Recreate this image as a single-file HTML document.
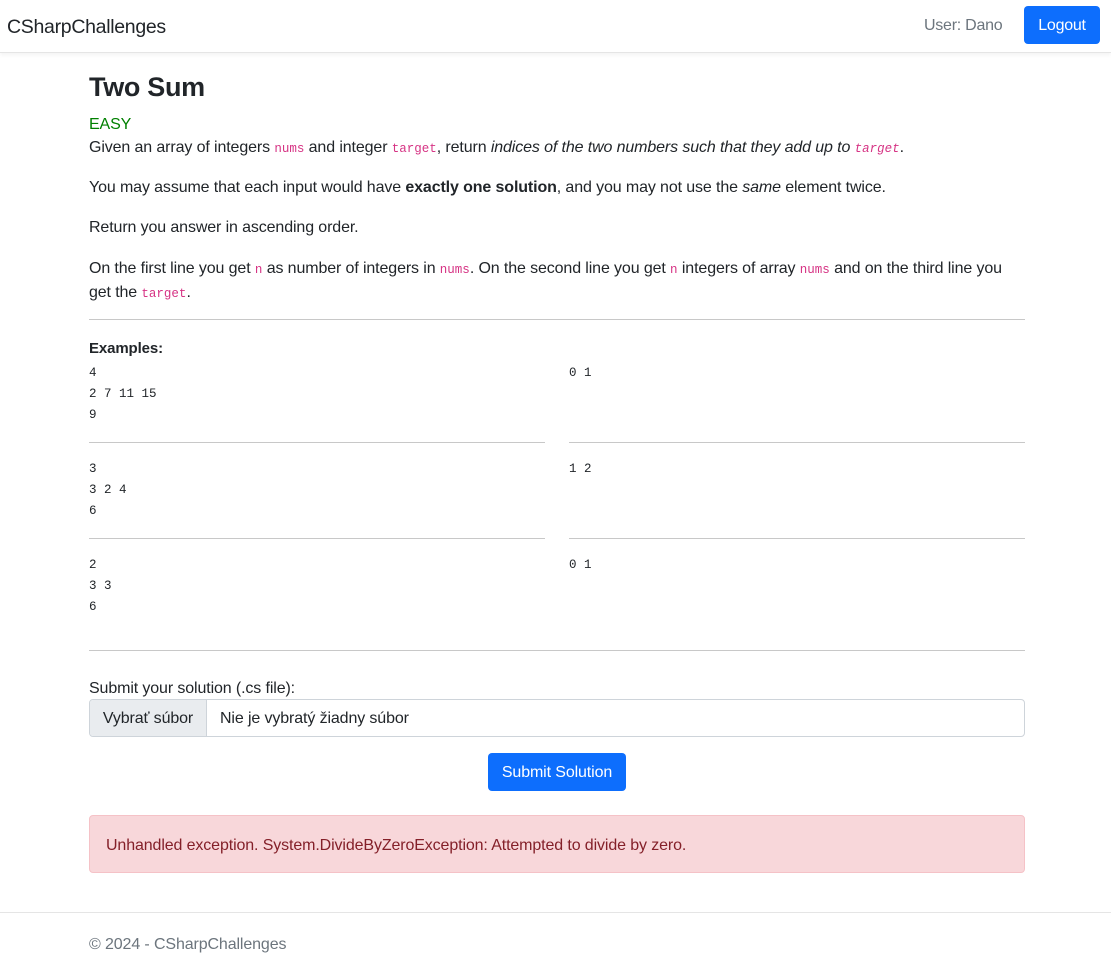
<!DOCTYPE html>
<html><head><meta charset="utf-8"><style>
body{margin:0;width:1111px;height:964px;font-family:"Liberation Sans",sans-serif;color:#212529;font-size:16px;position:relative;overflow:hidden;background:#fff}
.a{position:absolute;white-space:nowrap}
.t{letter-spacing:-0.12px}
code{font-family:"Liberation Mono",monospace;font-size:12.5px;color:#d63384;line-height:1;letter-spacing:0}
.m{font-family:"Liberation Mono",monospace;font-size:12.5px;line-height:21px;color:#212529}
.hr{position:absolute;height:1px;background:#c8c8c8}
</style></head><body>
<div class="a" style="left:0;top:0;width:1111px;height:52px;border-bottom:1px solid #e5e5e5;box-shadow:0 2px 4px rgba(0,0,0,.05)"></div>
<div class="a" style="left:7px;top:16px;font-size:19.5px;color:#212529;letter-spacing:-0.3px">CSharpChallenges</div>
<div class="a" style="left:924px;top:17px;color:#6c757d;letter-spacing:-0.25px">User: Dano</div>
<div class="a" style="left:1024px;top:6px;width:76px;height:38px;background:#0d6efd;border-radius:4px;color:#fff;line-height:40px;text-align:center;letter-spacing:-0.25px">Logout</div>

<div class="a" style="left:89px;top:72px;font-size:27px;font-weight:bold;color:#212529;letter-spacing:-0.3px">Two Sum</div>
<div class="a t" style="left:89px;top:116px;color:green">EASY</div>
<div class="a t" style="left:89px;top:139px">Given an array of integers <code>nums</code> and integer <code>target</code>, return <i>indices of the two numbers such that they add up to <code>target</code></i>.</div>
<div class="a t" style="left:89px;top:179px">You may assume that each input would have <b>exactly one solution</b>, and you may not use the <i>same</i> element twice.</div>
<div class="a t" style="left:89px;top:219px">Return you answer in ascending order.</div>
<div class="a t" style="left:89px;top:257px;line-height:24px">On the first line you get <code>n</code> as number of integers in <code>nums</code>. On the second line you get <code>n</code> integers of array <code>nums</code> and on the third line you<br>get the <code>target</code>.</div>
<div class="hr" style="left:89px;top:319px;width:936px"></div>
<div class="a t" style="left:89px;top:340px;font-size:15px;font-weight:bold">Examples:</div>

<div class="a m" style="left:89px;top:363px">4<br>2 7 11 15<br>9</div>
<div class="a m" style="left:569px;top:363px">0 1</div>
<div class="hr" style="left:89px;top:442px;width:456px"></div>
<div class="hr" style="left:569px;top:442px;width:456px"></div>
<div class="a m" style="left:89px;top:459px">3<br>3 2 4<br>6</div>
<div class="a m" style="left:569px;top:459px">1 2</div>
<div class="hr" style="left:89px;top:538px;width:456px"></div>
<div class="hr" style="left:569px;top:538px;width:456px"></div>
<div class="a m" style="left:89px;top:555px">2<br>3 3<br>6</div>
<div class="a m" style="left:569px;top:555px">0 1</div>
<div class="hr" style="left:89px;top:650px;width:936px"></div>

<div class="a t" style="left:89px;top:680px">Submit your solution (.cs file):</div>
<div class="a" style="left:89px;top:699px;width:934px;height:36px;border:1px solid #ced4da;border-radius:4px;overflow:hidden">
<div class="a t" style="left:0;top:0;width:116px;height:36px;background:#e9ecef;border-right:1px solid #ced4da;line-height:38px;text-align:center">Vybrať súbor</div>
<div class="a t" style="left:130px;top:0;line-height:38px">Nie je vybratý žiadny súbor</div></div>
<div class="a t" style="left:488px;top:753px;width:138px;height:38px;background:#0d6efd;border-radius:4px;color:#fff;line-height:40px;text-align:center">Submit Solution</div>

<div class="a" style="left:89px;top:815px;width:934px;height:56px;background:#f8d7da;border:1px solid #f5c2c7;border-radius:4px"></div>
<div class="a t" style="left:106px;top:837px;color:#842029">Unhandled exception. System.DivideByZeroException: Attempted to divide by zero.</div>

<div class="hr" style="left:0;top:912px;width:1111px;background:#e5e5e5"></div>
<div class="a t" style="left:89px;top:936px;color:#6c757d">© 2024 - CSharpChallenges</div>
</body></html>
